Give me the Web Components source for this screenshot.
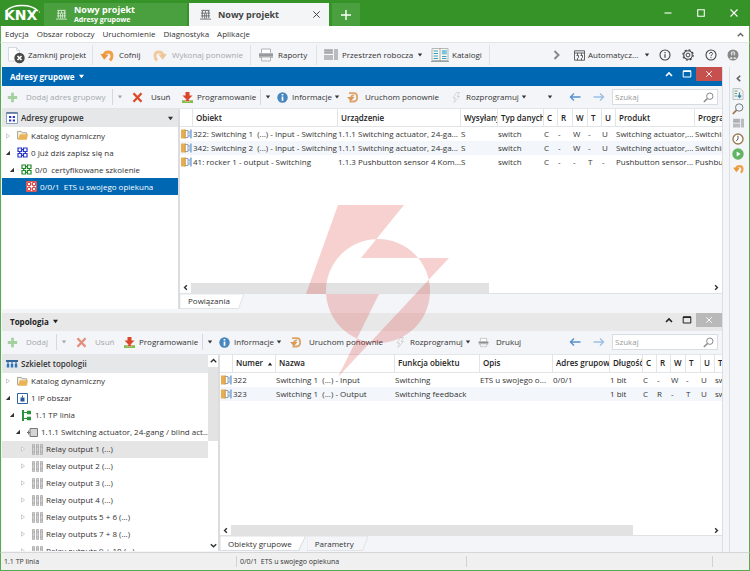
<!DOCTYPE html>
<html lang="pl">
<head>
<meta charset="utf-8">
<title>ETS – Nowy projekt</title>
<style>
  html, body { height: 100%; }
  body { margin: 0; font: 8px/14px "Open Sans", "Noto Sans", sans-serif; color: #333; background: #f3f5f8; }
</style>
</head>
<body>
<ets-app></ets-app>

<script>
const ICONS = {
  building: ['0 0 12 12', '<g fill="none" stroke="currentColor" opacity=".8"><path d="M1.500 1.500h9M2.500 2v8M9.500 2v8M0 11h12M1 4.500h10M1 7.500h10" /><path d="M6 2v2.500M5 5v5.500M7 5v5.500M4 1.500L2.500 3M8 1.500L9.500 3" stroke-width=".9"/></g>'],
  close: ['0 0 10 10', '<path d="M1.5 1.5l7 7M8.5 1.5l-7 7" stroke="currentColor" stroke-width="1.1"/>'],
  plus: ['0 0 10 10', '<path d="M5 0v10M0 5h10" stroke="currentColor" stroke-width="1.4"/>'],
  min: ['0 0 10 10', '<path d="M1.5 5h7" stroke="currentColor" stroke-width="1.1"/>'],
  max: ['0 0 10 10', '<path d="M1.7 1.7h6.6v6.6H1.7z" fill="none" stroke="currentColor" stroke-width="1.1"/>'],
  win: ['0 0 10 10', '<path d="M1.2 2h7.6v6H1.2z" fill="none" stroke="currentColor"/><path d="M1 2.2h8" stroke="currentColor" stroke-width="1.6"/>'],
  up: ['0 0 10 10', '<path d="M2 7l3-3 3 3" fill="none" stroke="currentColor" stroke-width="1.6"/>'],
  down: ['0 0 10 10', '<path d="M2 3.5l3 3 3-3" fill="none" stroke="currentColor" stroke-width="1.6"/>'],
  left: ['0 0 10 10', '<path d="M6.5 2.5L4 5l2.500 2.500" fill="none" stroke="currentColor" stroke-width="1.6"/>'],
  right: ['0 0 10 10', '<path d="M3.500 2.500L6 5 3.500 7.500" fill="none" stroke="currentColor" stroke-width="1.6"/>'],
  more: ['0 0 10 10', '<path d="M2.500 1l4 4-4 4" fill="none" stroke="#888" stroke-width="2"/>'],
  caret: ['0 0 6 6', '<path d="M.8 1.500h4.400L3 4.500z" fill="currentColor"/>'],
  sort: ['0 0 6 6', '<path d="M.8 4.500h4.400L3 1.500z" fill="currentColor"/>'],
  docx: ['0 0 18 18', '<path d="M.5 1.500h8l3 3V15H.5z" fill="#fff" stroke="#ccd1d5" stroke-width=".8"/><path d="M8.500 1.500v3h3" fill="none" stroke="#ccd1d5" stroke-width=".8"/><circle cx="11.500" cy="12" r="5.200" fill="#4a4a4a"/><path d="M9.500 10l4 4M13.500 10l-4 4" stroke="#fff" stroke-width="1.700"/>'],
  undo: ['0 0 14 14', '<path d="M4 7.500C4.500 3 12 2.500 12 8c0 1.500-.6 3-2 4.500" fill="none" stroke="#efa044" stroke-width="2.900"/><path d="M.2 5.800l4 6 4.300-5z" fill="#ea963a"/>'],
  redo: ['0 0 14 14', '<g opacity=".5"><path d="M10 7.500C9.500 3 2 2.500 2 8c0 1.500.6 3 2 4.500" fill="none" stroke="#efa044" stroke-width="2.900"/><path d="M13.800 5.800l-4 6-4.300-5z" fill="#ea963a"/></g>'],
  printer: ['0 0 16 14', '<path d="M3.500 5V1h9v4" fill="#fff" stroke="#aaa" stroke-width=".9"/><path d="M1 5h14v5H1z" fill="#b4b6b8"/><path d="M1 7h14" stroke="#85878a" stroke-width="1.200"/><path d="M3.500 9h9v4h-9z" fill="#f5f5f5" stroke="#aaa" stroke-width=".8"/>'],
  workspace: ['0 0 14 14', '<path d="M0 1h9v5H0zM0 7h9v5H0zM10 1h4v11h-4z" fill="#b9bcbf"/><path d="M1 2.500h7M1 4.500h7" stroke="#a2a5a8"/>'],
  catalog: ['0 0 18 16', '<path d="M1 1.500h16v12H1z" fill="#fbf8ee" stroke="#b4b9b9"/><path d="M0 14.500h18" stroke="#94a3a3"/><path d="M9 1v14" stroke="#999" stroke-width=".8"/><path d="M2.500 4h4.500M2.500 6.500h4.500M2.500 9h4.500M2.500 11.500h4.500M11 9.500h4.500M11 11.500h4.500" stroke="#3aa0c9" stroke-width="1.200"/><path d="M10.800 3h5v4.500h-5z" fill="#7cc4df"/>'],
  auto: ['0 0 11 11', '<path d="M.5.800h10v9.400H.5zM.5 3h10M3.500 3v2.500M2.500 5.500h2v2l-1 .8v2M7.500 3v2.500M6.500 5.500h2v2l-1 .8v2" fill="none" stroke="#555" stroke-width=".9"/>'],
  about: ['0 0 12 12', '<circle cx="6" cy="6" r="5" fill="none" stroke="#444" stroke-width="1.100"/><path d="M6 5.200v3.600M6 3v1.200" stroke="#444" stroke-width="1.200"/>'],
  gear: ['0 0 12 12', '<circle cx="6" cy="6" r="4.300" fill="none" stroke="#444" stroke-width="1.100"/><circle cx="6" cy="6" r="5.200" fill="none" stroke="#444" stroke-width="1.100" stroke-dasharray="2.050 2.033"/><circle cx="6" cy="6" r="1.900" fill="none" stroke="#444"/>'],
  help: ['0 0 12 12', '<circle cx="6" cy="6" r="5" fill="none" stroke="#444" stroke-width="1.100"/><path d="M4.500 4.800c0-2 3-1.900 3-.1C7.500 5.900 6 5.800 6 7.200M6 8.200v1" fill="none" stroke="#444"/>'],
  user: ['0 0 12 12', '<circle cx="6" cy="6" r="5.500" fill="#888"/><circle cx="6" cy="4.500" r="2.300" fill="#ddd"/><path d="M2.500 10C3 7 9 7 9.500 10z" fill="#ddd"/><path d="M6 3.500v6.500" stroke="#666"/>'],
  add: ['0 0 11 11', '<path d="M5.500.800v9.400M.8 5.500h9.400" stroke="#a5d1a0" stroke-width="2.800"/>'],
  del: ['0 0 11 11', '<path d="M1.500 1.200l8 8.600M9.500 1.200l-8 8.600" stroke="#dd4a2b" stroke-width="2.300"/>'],
  prog: ['0 0 11 11', '<path d="M3.500 0h4v3.500h3L5.500 8.500.5 3.500h3z" fill="#dc4628"/><path d="M0 8.300h3v1.200h5V8.300h3V11H0z" fill="#83bd4a"/><path d="M3.500 8.500h4" stroke="#dc4628" stroke-width="1.500"/>'],
  info: ['0 0 11 11', '<circle cx="5.500" cy="5.500" r="5.200" fill="#4787be"/><path d="M5.500 4.600v4.200M5.500 2v1.600" stroke="#fff" stroke-width="1.700"/>'],
  restart: ['0 0 11 11', '<path d="M2 1.200h5a3.300 3.300 0 013.100 3.300v1.500a3.300 3.300 0 01-3.100 3.500H2.500" fill="none" stroke="#dca467" stroke-width="1.800"/><path d="M7 3.500c-2-.3-3 .8-3 2.500" fill="none" stroke="#dca467" stroke-width="1.700"/><path d="M0 5h7.500L3.800 9.200z" fill="#d99a58"/>'],
  bolt: ['0 0 11 11', '<path d="M5.500.5L2 6h2.500L3 10.500 8.500 4.500H6L8.500.5z" fill="#f6f7f8" stroke="#ccc" stroke-width=".8"/>'],
  back: ['0 0 12 10', '<path d="M11.500 5H1.500M5 1.500L1.500 5 5 8.500" fill="none" stroke="#5590cc" stroke-width="1.400"/>'],
  fwd: ['0 0 12 10', '<path d="M.5 5h10M7 1.500L10.500 5 7 8.500" fill="none" stroke="#9dbfe4" stroke-width="1.400"/>'],
  search: ['0 0 11 11', '<circle cx="6.800" cy="4.200" r="3.200" fill="#fff" stroke="#888"/><path d="M4.500 6.500L.8 10" stroke="#888" stroke-width="1.500"/>'],
  group: ['0 0 12 12', '<path d="M.5.500h11v11H.5z" fill="#fff" stroke="#8aa0bd"/><path d="M.5 1h11" stroke="#5c7597" stroke-width="1.600"/><path d="M3 4h2.300v2H3zM6.800 4H9v2H6.800zM3 7.500h2.300v2H3zM6.800 7.500H9v2H6.800z" fill="#2637c6"/>'],
  topo: ['0 0 12 10', '<path d="M0 2h12" stroke="#23568f" stroke-width="1.800"/><path d="M2 2v5M6 2v5M10 2v5" stroke="#2c73b9" stroke-width="1.200"/><path d="M.800 5h2.400v3.500H.800zM4.800 5h2.400v3.500H4.800zM8.800 5h2.400v3.500H8.800z" fill="#2c73b9"/>'],
  folder: ['0 0 12 11', '<path d="M.5 1h4l1 1.500h5V9H.5z" fill="#f4f0e4" stroke="#8c8573" stroke-width=".8"/><path d="M3 4h9l-1.500 6H1z" fill="#eab456"/>'],
  cells: ['0 0 11 11', '<path d="M1 1h3.500v3.500H1zM6.500 1H10v3.500H6.500zM1 6.500h3.500V10H1zM6.500 6.500H10V10H6.500zM4.500 2.700h2M4.500 8.300h2M2.700 4.500v2M8.300 4.500v2" fill="none" stroke="currentColor" stroke-width="1.200"/>'],
  cellsbox: ['0 0 11 11', '<path d="M0 0h11v11H0z" fill="#fff"/><path d="M1.500 1.500h3v3h-3zM6.500 1.500h3v3h-3zM1.500 6.500h3v3h-3zM6.500 6.500h3v3h-3zM4.500 3h2M4.500 8h2M3 4.500v2M8 4.500v2M0 .4h11M0 10.600h11M.4 0v11M10.600 0v11" fill="none" stroke="#d63535" stroke-width=".9"/>'],
  area: ['0 0 11 11', '<path d="M.5.500h10v10H.5z" fill="#fff" stroke="#32639f"/><path d="M5.500 2.500v2" stroke="#32639f"/><path d="M3.500 4.500h4v4h-4z" fill="#27589a"/>'],
  line: ['0 0 11 11', '<path d="M2 0v11" stroke="#27933a" stroke-width="2"/><path d="M2 2.500h5M2 8.500h5" stroke="#27933a"/><path d="M6 .8h4v3.400H6zM6 6.800h4v3.400H6z" fill="#27933a"/>'],
  device: ['0 0 11 11', '<path d="M0 5.500h3" stroke="#666"/><path d="M3 1.500h7.500v8H3z" fill="#d5d5d5" stroke="#777"/><path d="M1.500 3.500v4" stroke="#777"/>'],
  channel: ['0 0 11 11', '<path d="M.5.500h2v10h-2zM4.500.500h2v10h-2zM8.500.500h2v10h-2z" fill="#d3d3d3" stroke="#a2a2a2" stroke-width=".7"/><path d="M.5 3h2M4.500 3h2M8.500 3h2M.5 8h2M4.500 8h2M8.500 8h2" stroke="#999" stroke-width=".6"/>'],
  object: ['0 0 11 10', '<path d="M0 .5h4.500v9H0z" fill="#e7ad50"/><path d="M4.500 1.500H7v7H4.500M7 3h2v4H7" fill="#fff" stroke="#7b98bd" stroke-width=".9"/><path d="M9 .5h1.800v9H9z" fill="#8db2df"/><path d="M4.300.5v9" stroke="#b3832e" stroke-width=".7"/>'],
  sbook: ['0 0 12 12', '<path d="M1 .5h7l3 2.500v8.500H1z" fill="#eef1f1" stroke="#b3b9b9" stroke-width=".8"/><path d="M2.500 3h3M2.500 5.500h2.500M2.500 8h2.500" stroke="#6da47b"/><path d="M7.500 4.500v5M5.800 7.500l1.700 2 1.700-2" fill="none" stroke="#3e88a5" stroke-width="1.200"/>'],
  ssearch: ['0 0 12 12', '<circle cx="7.200" cy="4.500" r="3.700" fill="#eef4fb" stroke="#777"/><path d="M4.500 7.200L.8 11" stroke="#a1734c" stroke-width="1.700"/>'],
  clock: ['0 0 12 12', '<circle cx="6" cy="6" r="5" fill="#fff" stroke="#9c7b50" stroke-width="1.400"/><path d="M6 2.800V6L4.300 8" fill="none" stroke="#555"/>'],
  play: ['0 0 12 12', '<circle cx="6" cy="6" r="5.700" fill="#62b562"/><path d="M4.700 3.500L8.500 6 4.700 8.500z" fill="#fff"/>'],
  open: ['0 0 6 6', '<path d="M5 .8V5H.8z" fill="#333"/>'],
  shut: ['0 0 6 6', '<path d="M1.500.8L4.500 3l-3 2.200z" fill="#fff" stroke="#bbb" stroke-width=".7"/>'],
  arc: ['0 0 36 10', '<path d="M1 7C8-.5 26-.5 33 7" fill="none" stroke="#fff" stroke-width="1.500"/><circle cx="34.500" cy="8" r=".6" fill="#fff"/>']
};

function define(name, css, html) {
  customElements.define(name, class extends HTMLElement {
    constructor() { super(); this.attachShadow({ mode: 'open' }); }
    connectedCallback() {
      const body = typeof html === 'function' ? html(this) : html;
      this.shadowRoot.innerHTML = `<style>*{box-sizing:border-box}button,input,a{font:inherit;color:inherit;margin:0}button{border:0;background:none;padding:0;cursor:pointer}${css}</style>${body}`;
    }
  });
}
const has = (el, a) => el.hasAttribute(a);
const at = (el, a, d = '') => el.getAttribute(a) ?? d;

/* size: "w" or "w h" in pixels */
define('ets-icon', ':host{display:block;flex:none}svg{display:block}', el => {
  const [box, art] = ICONS[at(el, 'name')];
  const [w, h = w] = at(el, 'size', '11').split(' ');
  return `<svg width="${w}" height="${h}" viewBox="${box}" aria-hidden="true">${art}</svg>`;
});

/* Toolbar command: icon, label, optional drop-down caret and separator */
define('ets-tool', `
  :host{display:block;flex:none}
  button{display:flex;align-items:center;width:100%;height:16px;white-space:nowrap;text-align:left}
  :host([disabled]) button{color:#a4a8ac}
  :host([disabled]) ets-icon[name=del]{opacity:.6}
  :host([sep]) button{border-left:1px solid #d5d9dd;padding-left:4px}`, el => {
  el.style.width = at(el, 'w') + 'px';
  const label = has(el, 'label') ? ` aria-label="${at(el, 'label')}"` : '';
  return `<button type="button"${label} style="gap:${at(el, 'gap', '4')}px">${has(el, 'icon') ? `<ets-icon name="${at(el, 'icon')}" size="${at(el, 'size', '11')}"></ets-icon>` : ''}<slot></slot></button>`;
});

define('ets-titlebar', `
  :host{display:flex;height:26px;background:#359327;color:#fff;align-items:flex-end}
  .logo{width:44px;height:26px;padding:4px 0 0 4px;position:relative;font:bold 14px/22px "DejaVu Sans",sans-serif}
  .logo ets-icon{position:absolute;left:5px;top:4px}
  .tab{display:flex;align-items:center;gap:7px;height:23px;width:143px;padding:0 8px 0 12px;background:#4a9f3e;margin-right:2px;font-size:9px;font-weight:700;line-height:11px;text-align:left}
  .tab.on{background:#f4f5f6;color:#444;width:140px;margin-right:3px;padding-left:11px}
  .tab span{flex:1}
  small{display:block;font-size:7px;line-height:10px}
  .new{width:28px;height:23px;background:#4a9f3e;display:grid;place-items:center}
  .win{margin-left:auto;display:flex;height:26px}
  .win button{width:33px;display:grid;place-items:center}`, `
  <div class="logo"><ets-icon name="arc" size="36 10"></ets-icon>KNX</div>
  <button class="tab" type="button"><ets-icon name="building" size="11"></ets-icon><span>Nowy projekt<small>Adresy grupowe</small></span></button>
  <div class="tab on"><ets-icon name="building" size="11"></ets-icon><span>Nowy projekt</span><button type="button" aria-label="Zamknij kartę"><ets-icon name="close" size="9"></ets-icon></button></div>
  <button class="new" type="button" aria-label="Nowa karta"><ets-icon name="plus" size="10"></ets-icon></button>
  <div class="win">
    <button type="button" aria-label="Minimalizuj"><ets-icon name="min" size="10"></ets-icon></button>
    <button type="button" aria-label="Maksymalizuj"><ets-icon name="max" size="10"></ets-icon></button>
    <button type="button" aria-label="Zamknij"><ets-icon name="close" size="10"></ets-icon></button>
  </div>`);

define('ets-menu', `
  :host{display:flex;align-items:center;height:16px;padding:0 4px;background:#fff;gap:8px}
  nav{display:flex;gap:8px;flex:1}
  ets-icon{color:#666}`, `
  <nav><button type="button">Edycja</button><button type="button">Obszar roboczy</button><button type="button">Uruchomienie</button><button type="button">Diagnostyka</button><button type="button">Aplikacje</button></nav>
  <button type="button" aria-label="Zwiń"><ets-icon name="up" size="9"></ets-icon></button>`);

define('ets-toolbar', `
  :host{display:flex;align-items:center;height:25px;padding:0 10px 0 7px;background:#f3f5f8;border-top:1px solid #e3e6e9}
  .end{margin-left:auto;display:flex;align-items:center}`,
  `<slot></slot><div class="end"><slot name="end"></slot></div>`);

define('ets-search', `
  :host{display:block;width:106px}
  label{display:flex;align-items:center;height:16px;border:1px solid #d9dde1;background:#fff;padding:0 3px 0 2px}
  input{flex:1;min-width:0;border:0;outline:0;background:none;padding:0;height:14px}
  input::placeholder{color:#999;opacity:1}`,
  `<label><input type="text" placeholder="Szukaj" aria-label="Szukaj"><ets-icon name="search" size="11"></ets-icon></label>`);

define('ets-panel', `
  :host{display:flex;flex-direction:column;min-height:0;min-width:0}
  header{display:flex;align-items:center;height:18px;padding-left:8px;background:#e8e8e8;color:#222;flex:none}
  :host([active]) header{height:19px;background:#0067b3;color:#fff}
  h2{font-size:8px;line-height:14px;margin:0;display:flex;align-items:center;gap:3px;flex:1}
  header button{width:18px;height:14px;display:grid;place-items:center;align-self:flex-start}
  header .x{width:26px;background:#b9b9b9;color:#fff}
  :host([active]) .x{background:#c6504d}
  .bar{display:flex;align-items:center;height:23px;padding:0 4px 0 5px;flex:none;border-bottom:1px solid #e3e6e9}
  :host(:not([active])) .bar{height:24px}
  .end{margin-left:auto;display:flex;align-items:center}
  .body{display:flex;flex:1;min-height:0}`, el => `
  <header><h2>${at(el, 'heading')}<ets-icon name="caret" size="7"></ets-icon></h2>
    <button type="button" aria-label="Zwiń panel"><ets-icon name="up" size="10"></ets-icon></button>
    <button type="button" aria-label="Powiększ panel"><ets-icon name="win" size="10"></ets-icon></button>
    <button class="x" type="button" aria-label="Zamknij panel"><ets-icon name="close" size="8"></ets-icon></button></header>
  <div class="bar"><slot name="tools"></slot><div class="end">
    <ets-tool icon="back" size="12 10" w="24" label="Wstecz"></ets-tool><ets-tool icon="fwd" size="12 10" w="19" label="Dalej"></ets-tool><ets-search></ets-search></div></div>
  <div class="body"><slot></slot></div>`);

define('ets-tree', `
  :host{display:grid;grid-template:18px 1fr/1fr auto;background:#fff;min-height:0;overflow:hidden;flex:none;border-right:2px solid #dadcdf}
  .head{display:flex;align-items:center;gap:3px;padding:0 4px;background:#e6e7e8;font-weight:600}
  .head span{flex:1}
  .rows{grid-column:1;overflow:hidden;min-height:0}
  .bar{grid-column:2;grid-row:1/3;width:10px;display:flex;flex-direction:column}
  .bar button{height:12px;display:grid;place-items:center;background:#fff}
  .thumb{background:#e3e3e3;flex:0 0 38%}.rest{flex:1}`, el => `
  <div class="head"><ets-icon name="${at(el, 'icon')}" size="${at(el, 'size', '12')}"></ets-icon><span>${at(el, 'heading')}</span>${has(el, 'scroll') ? '' : '<ets-icon name="caret" size="7"></ets-icon>'}</div>
  <div class="rows" role="tree"><slot></slot></div>
  ${has(el, 'scroll') ? '<div class="bar"><button type="button" aria-label="W górę"><ets-icon name="up" size="9"></ets-icon></button><div class="thumb"></div><div class="rest"></div><button type="button" aria-label="W dół"><ets-icon name="down" size="9"></ets-icon></button></div>' : ''}`);

define('ets-node', `
  :host{display:flex;align-items:center;height:17px;white-space:pre;overflow:hidden;gap:6px}
  :host([on=blue]){background:#0067b3;color:#fff}
  :host([on=grey]){background:#e5e5e5}
  .t{display:flex;align-items:center;gap:3px}`, el => {
  el.setAttribute('role', 'treeitem');
  el.style.paddingLeft = at(el, 'indent') + 'px';
  const state = at(el, 'state');
  return `${state ? `<ets-icon name="${state}" size="6"></ets-icon>` : ''}<span class="t"><ets-icon name="${at(el, 'icon')}" size="11" style="color:${at(el, 'tint', 'inherit')}"></ets-icon><slot></slot></span>`;
});

const GRIDS = {
  links: {
    cols: [['', 13], ['Obiekt', 145], ['Urządzenie', 123], ['Wysyłany', 37], ['Typ danych', 46], ['C', 14], ['R', 15], ['W', 15], ['T', 14], ['U', 14], ['Produkt', 79], ['Program', 0]],
    rows: [
      ['322: Switching 1  (...) - Input - Switching', '1.1.1 Switching actuator, 24-ga...', 'S', 'switch', 'C', '-', 'W', '-', 'U', 'Switching actuator,...', 'Switching'],
      ['342: Switching 2  (...) - Input - Switching', '1.1.1 Switching actuator, 24-ga...', 'S', 'switch', 'C', '-', 'W', '-', 'U', 'Switching actuator,...', 'Switching'],
      ['41: rocker 1 - output - Switching', '1.1.3 Pushbutton sensor 4 Kom...', 'S', 'switch', 'C', '-', '-', 'T', '-', 'Pushbutton sensor...', 'Pushbutton']
    ]
  },
  objects: {
    cols: [['', 13], ['Numer', 43], ['Nazwa', 119], ['Funkcja obiektu', 85], ['Opis', 73], ['Adres grupowy', 57], ['Długość', 33], ['C', 14], ['R', 14], ['W', 15], ['T', 15], ['U', 14], ['Typ', 0]],
    sorted: 1,
    rows: [
      ['322', 'Switching 1  (...) - Input', 'Switching', 'ETS u swojego o...', '0/0/1', '1 bit', 'C', '-', 'W', '-', 'U', 'switch'],
      ['323', 'Switching 1  (...) - Output', 'Switching feedback', '', '', '1 bit', 'C', 'R', '-', 'T', 'U', 'switch']
    ]
  }
};
define('ets-grid', `
  :host{display:block;flex:1;min-height:0;overflow:hidden;background:#fff}
  table{table-layout:fixed;width:100%;border-collapse:separate;border-spacing:0}
  th,td{padding:0;text-align:left;white-space:pre;overflow:hidden;text-overflow:clip}
  th{height:18px;padding-left:3px;font-weight:600;color:#222;border-bottom:1px solid #e2e5e8;border-right:1px solid #e2e5e8}
  td{height:14px;line-height:14px}
  td ets-icon{margin-left:1px}
  th ets-icon{display:inline-block;margin-left:4px;vertical-align:middle}
  tr:nth-child(even) td{background:#f3f7fb}`, el => {
  const g = GRIDS[at(el, 'source')];
  const last = i => i === g.cols.length - 1 ? ' style="border-right:0"' : '';
  return `<table><colgroup>${g.cols.map(c => `<col${c[1] ? ` style="width:${c[1]}px"` : ''}>`).join('')}</colgroup>
  <thead><tr>${g.cols.map((c, i) => `<th scope="col"${last(i)}>${c[0]}${g.sorted === i ? '<ets-icon name="sort" size="6"></ets-icon>' : ''}</th>`).join('')}</tr></thead>
  <tbody>${g.rows.map(r => `<tr><td><ets-icon name="object" size="11 10"></ets-icon></td>${r.map(t => `<td>${t}</td>`).join('')}</tr>`).join('')}</tbody></table>`;
});

define('ets-hscroll', `
  :host{display:flex;height:11px;flex:none;background:#fff;border-bottom:1px solid #dfe2e5}
  button{width:11px;display:grid;place-items:center}
  .thumb{background:#e2e2e2}.rest{flex:1}`, el => `
  <button type="button" aria-label="W lewo"><ets-icon name="left" size="9"></ets-icon></button><div class="thumb" style="width:${at(el, 'thumb')}"></div><div class="rest"></div><button type="button" aria-label="W prawo"><ets-icon name="right" size="9"></ets-icon></button>`);

define('ets-tabs', `
  :host{display:flex;height:15px;flex:none}
  button{position:relative;height:15px;padding:0 14px 0 8px;margin-right:1px}
  svg{position:absolute;inset:0;width:100%;height:100%}
  span{position:relative}`, el => at(el, 'items').split('|').map((t, i) =>
  `<button type="button"><svg viewBox="0 0 60 15" preserveAspectRatio="none"><path d="M0 0H60L55 14.500H0z" fill="${i ? '#f3f5f8' : '#fff'}" stroke="#dcdfe2" stroke-width=".8"/></svg><span>${t}</span></button>`).join(''));

define('ets-pane', `:host{display:flex;flex-direction:column;flex:1;min-width:0;min-height:0}`, '<slot></slot>');

define('ets-side', `
  :host{display:flex;flex-direction:column;align-items:center;width:19px;padding:5px 2px 0 0;box-sizing:border-box;background:#f3f5f8;border-left:1px solid #dcdfe2;gap:2px}
  button{height:13px;display:grid;place-items:center;color:#666}
  button:first-child{margin-bottom:5px}`,
  [['left', 'Rozwiń', 11], ['sbook', 'Katalogi', 12], ['ssearch', 'Znajdź', 12], ['workspace', 'Obszary', 11], ['clock', 'Historia', 12], ['play', 'Operacje', 12], ['undo', 'Cofnięcia', 11]]
    .map(([n, l, s]) => `<button type="button" aria-label="${l}"><ets-icon name="${n}" size="${s}"></ets-icon></button>`).join(''));

define('ets-status', `
  :host{display:flex;align-items:center;height:18px;background:#f0f0f0;border-top:1px solid #d5d7d9;font-size:7px;white-space:pre;flex:none}
  span{height:11px;line-height:11px;padding-left:3px;border-right:1px solid #d2d2d2}
  .a{width:236px}.b{width:230px}.c{flex:1;margin-right:36px}`,
  `<span class="a">1.1 TP linia</span><span class="b">0/0/1  ETS u swojego opiekuna</span><span class="c"></span>`);

define('ets-watermark', `:host{position:absolute;left:calc(50% - 69px);top:205px;pointer-events:none}svg{display:block}`,
  `<svg width="144" height="173" viewBox="306 205 144 173" aria-hidden="true"><path fill="#d92a2a" fill-opacity=".22" fill-rule="evenodd" d="M338 205H404L361 258H449L338 377 379 294H306zM326 291a52 52 0 10104 0a52 52 0 10-104 0z"/></svg>`);

define('ets-app', `
  :host{display:flex;flex-direction:column;height:100vh;box-sizing:border-box;position:relative;border-bottom:1px solid #59ab50}
  .work{display:flex;flex:1;min-height:0;border:solid #59ab50;border-width:0 1px}
  .main{flex:1;min-width:0;display:grid;grid-template-rows:241fr 238fr;gap:4px;margin-right:6px;border-right:1px solid #dcdfe2;padding:0 0 1px 1px}
  ets-side{margin-right:1px}
  ets-menu,ets-toolbar,ets-status{border-left:1px solid #59ab50;border-right:1px solid #59ab50}
  i{width:1px;height:20px;background:#dfe2e5;margin-right:7px;flex:none}`, `
  <ets-titlebar></ets-titlebar>
  <ets-menu></ets-menu>
  <ets-toolbar>
    <ets-tool icon="docx" size="18" w="84" gap="2">Zamknij projekt</ets-tool><i></i>
    <ets-tool icon="undo" size="14" w="53" gap="5">Cofnij</ets-tool>
    <ets-tool icon="redo" size="14" w="97" gap="5" disabled>Wykonaj ponownie</ets-tool><i></i>
    <ets-tool icon="printer" size="16 14" w="58" gap="4">Raporty</ets-tool><i></i>
    <ets-tool icon="workspace" size="14" w="107">Przestrzeń robocza <ets-icon name="caret" size="6"></ets-icon></ets-tool>
    <ets-tool icon="catalog" size="18 16" w="58" gap="3">Katalogi</ets-tool><i></i>
    <ets-tool slot="end" icon="more" size="10" w="22" label="Więcej"></ets-tool>
    <ets-tool slot="end" icon="auto" size="11" w="70" gap="3">Automatycz...</ets-tool>
    <ets-tool slot="end" icon="caret" size="6" w="15" label="Lista"></ets-tool>
    <ets-tool slot="end" icon="about" size="12" w="23" label="Informacje"></ets-tool>
    <ets-tool slot="end" icon="gear" size="12" w="23" label="Ustawienia"></ets-tool>
    <ets-tool slot="end" icon="help" size="12" w="22" label="Pomoc"></ets-tool>
    <ets-tool slot="end" icon="user" size="12" w="12" label="Konto"></ets-tool>
  </ets-toolbar>
  <div class="work">
    <div class="main">
      <ets-panel active heading="Adresy grupowe">
        <ets-tool slot="tools" icon="add" w="105" gap="8" disabled>Dodaj adres grupowy</ets-tool>
        <ets-tool slot="tools" icon="caret" size="6" w="20" sep disabled label="Opcje dodawania"></ets-tool>
        <ets-tool slot="tools" icon="del" w="50" gap="8">Usuń</ets-tool>
        <ets-tool slot="tools" icon="prog" w="78">Programowanie</ets-tool>
        <ets-tool slot="tools" icon="caret" size="6" w="17" sep label="Opcje programowania"></ets-tool>
        <ets-tool slot="tools" icon="info" w="57">Informacje</ets-tool>
        <ets-tool slot="tools" icon="caret" size="6" w="13" label="Opcje informacji"></ets-tool>
        <ets-tool slot="tools" icon="restart" w="104" gap="7">Uruchom ponownie</ets-tool>
        <ets-tool slot="tools" icon="bolt" w="70">Rozprogramuj</ets-tool>
        <ets-tool slot="tools" icon="caret" size="6" w="26" label="Opcje rozprogramowania"></ets-tool>
        <ets-tool slot="tools" icon="caret" size="6" w="6" label="Więcej"></ets-tool>
        <ets-tree style="width:178px" icon="group" heading="Adresy grupowe">
          <ets-node indent="3" state="shut" icon="folder">Katalog dynamiczny</ets-node>
          <ets-node indent="3" state="open" icon="cells" tint="#2b35c8">0 Już dziś zapisz się na</ets-node>
          <ets-node indent="7" state="open" icon="cells" tint="#238a2c">0/0  certyfikowane szkolenie</ets-node>
          <ets-node indent="24" on="blue" icon="cellsbox">0/0/1  ETS u swojego opiekuna</ets-node>
        </ets-tree>
        <ets-pane><ets-grid source="links"></ets-grid><ets-hscroll thumb="55%"></ets-hscroll><ets-tabs items="Powiązania"></ets-tabs></ets-pane>
      </ets-panel>
      <ets-panel heading="Topologia">
        <ets-tool slot="tools" icon="add" w="49" gap="8" disabled>Dodaj</ets-tool>
        <ets-tool slot="tools" icon="caret" size="6" w="20" sep disabled label="Opcje dodawania"></ets-tool>
        <ets-tool slot="tools" icon="del" w="48" gap="8" disabled>Usuń</ets-tool>
        <ets-tool slot="tools" icon="prog" w="78">Programowanie</ets-tool>
        <ets-tool slot="tools" icon="caret" size="6" w="17" sep label="Opcje programowania"></ets-tool>
        <ets-tool slot="tools" icon="info" w="57">Informacje</ets-tool>
        <ets-tool slot="tools" icon="caret" size="6" w="14" label="Opcje informacji"></ets-tool>
        <ets-tool slot="tools" icon="restart" w="105" gap="8">Uruchom ponownie</ets-tool>
        <ets-tool slot="tools" icon="bolt" w="70">Rozprogramuj</ets-tool>
        <ets-tool slot="tools" icon="caret" size="6" w="13" label="Opcje rozprogramowania"></ets-tool>
        <ets-tool slot="tools" icon="printer" size="11" w="50" gap="7">Drukuj</ets-tool>
        <ets-tree style="width:218px" scroll icon="topo" size="12 10" heading="Szkielet topologii">
          <ets-node indent="3" state="shut" icon="folder">Katalog dynamiczny</ets-node>
          <ets-node indent="3" state="open" icon="area">1 IP obszar</ets-node>
          <ets-node indent="7" state="open" icon="line">1.1 TP linia</ets-node>
          <ets-node indent="13" state="open" icon="device">1.1.1 Switching actuator, 24-gang / blind act...</ets-node>
          <ets-node indent="18" state="shut" on="grey" icon="channel">Relay output 1 (...)</ets-node>
          <ets-node indent="18" state="shut" icon="channel">Relay output 2 (...)</ets-node>
          <ets-node indent="18" state="shut" icon="channel">Relay output 3 (...)</ets-node>
          <ets-node indent="18" state="shut" icon="channel">Relay output 4 (...)</ets-node>
          <ets-node indent="18" state="shut" icon="channel">Relay outputs 5 + 6 (...)</ets-node>
          <ets-node indent="18" state="shut" icon="channel">Relay outputs 7 + 8 (...)</ets-node>
          <ets-node indent="18" state="shut" icon="channel">Relay outputs 9 + 10 (...)</ets-node>
        </ets-tree>
        <ets-pane><ets-grid source="objects"></ets-grid><ets-hscroll thumb="80%"></ets-hscroll><ets-tabs items="Obiekty grupowe|Parametry"></ets-tabs></ets-pane>
      </ets-panel>
    </div>
    <ets-side></ets-side>
  </div>
  <ets-status></ets-status>
  <ets-watermark></ets-watermark>`);
</script>
</body>
</html>
